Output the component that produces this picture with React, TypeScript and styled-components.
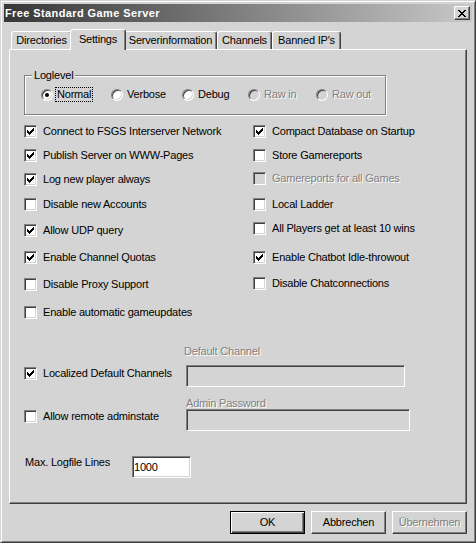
import React from "react";
import styled, { createGlobalStyle, css } from "styled-components";

const FACE = "#d4d4d4";
const SHADOW = "#808080";
const DARK = "#404040";
const LIGHT = "#ffffff";

const Global = createGlobalStyle`
  html, body { margin: 0; padding: 0; background: ${FACE}; }
  body {
    font-family: "Liberation Sans", Arial, sans-serif;
    font-size: 11px;
    line-height: 13px;
    letter-spacing: -0.2px;
    color: #000;
  }
  * { box-sizing: border-box; }
`;

const disabledText = css`
  color: ${SHADOW};
  text-shadow: 1px 1px 0 ${LIGHT};
`;

const Window = styled.div`
  width: 476px;
  height: 543px;
  display: flex;
  flex-direction: column;
  background: ${FACE};
  border: 1px solid;
  border-color: ${FACE} ${DARK} ${DARK} ${FACE};
  box-shadow: inset 1px 1px ${LIGHT}, inset -1px -1px ${SHADOW};
  padding: 3px;
`;

const TitleBar = styled.div`
  flex: none;
  height: 18px;
  display: flex;
  align-items: center;
  justify-content: space-between;
  padding: 0 2px 0 1px;
  background: linear-gradient(to right, #363636, #c8c8c8);
`;

const Title = styled.span`
  color: #fff;
  font-weight: bold;
  letter-spacing: 0.4px;
`;

const CloseButton = styled.div`
  width: 16px;
  height: 14px;
  display: flex;
  align-items: center;
  justify-content: center;
  background: ${FACE};
  border: 1px solid;
  border-color: ${LIGHT} ${DARK} ${DARK} ${LIGHT};
  box-shadow: inset -1px -1px ${SHADOW};
`;

const Body = styled.div`
  flex: 1;
  display: flex;
  flex-direction: column;
  padding: 7px 5px 0 5px;
`;

const TabStrip = styled.div`
  height: 20px;
  display: flex;
  align-items: flex-end;
  padding-left: 2px;
`;

const Tab = styled.div<{ $width: number; $active?: boolean }>`
  position: relative;
  width: ${(p) => p.$width}px;
  height: 18px;
  display: flex;
  align-items: center;
  justify-content: center;
  background: ${FACE};
  border-top: 1px solid ${LIGHT};
  border-left: 1px solid ${LIGHT};
  border-right: 1px solid ${DARK};
  border-radius: 3px 3px 0 0;
  box-shadow: inset -1px 0 ${SHADOW};
  padding-bottom: 1px;
  ${(p) =>
    p.$active &&
    css`
      z-index: 2;
      width: ${p.$width + 4}px;
      height: 21px;
      margin: 0 -2px -1px;
      padding-bottom: 2px;
    `}
`;

const Panel = styled.div`
  height: 455px;
  flex: none;
  display: flex;
  flex-direction: column;
  align-items: flex-start;
  border: 1px solid;
  border-color: ${LIGHT} ${DARK} ${DARK} ${LIGHT};
  box-shadow: inset -1px -1px ${SHADOW};
  padding-left: 14px;
`;

const GroupBox = styled.div`
  position: relative;
  margin-top: 25px;
  width: 362px;
  height: 40px;
  border: 1px solid ${SHADOW};
  box-shadow: inset 1px 1px ${LIGHT}, 1px 1px ${LIGHT};
  padding: 12px 0 0 16px;
`;

const Legend = styled.span`
  position: absolute;
  top: -7px;
  left: 7px;
  padding: 0 2px;
  background: ${FACE};
`;

const RadioRow = styled.div`
  display: grid;
  grid-template-columns: 70px 71px 66px 68px auto;
  height: 13px;
`;

const Option = styled.div`
  display: flex;
  align-items: center;
  gap: 4px;
`;

const Radio = styled.span<{ $checked?: boolean; $disabled?: boolean }>`
  width: 12px;
  height: 12px;
  flex: none;
  border-radius: 50%;
  display: flex;
  align-items: center;
  justify-content: center;
  border: 1px solid;
  border-color: ${SHADOW} ${LIGHT} ${LIGHT} ${SHADOW};
  box-shadow: inset 1px 1px ${DARK}, inset -1px -1px ${FACE};
  background: ${(p) => (p.$disabled ? FACE : LIGHT)};
  &::after {
    content: "";
    display: ${(p) => (p.$checked ? "block" : "none")};
    width: 4px;
    height: 4px;
    border-radius: 50%;
    background: #000;
  }
`;

const Caption = styled.span<{ $disabled?: boolean; $focus?: boolean }>`
  white-space: nowrap;
  ${(p) => p.$disabled && disabledText}
  ${(p) =>
    p.$focus &&
    css`
      outline: 1px dotted #000;
      margin-left: -1px;
      padding: 0 1px;
    `}
`;

const Columns = styled.div`
  display: grid;
  grid-template-columns: 229px 1fr;
  align-items: start;
  margin-top: 8px;
  width: 100%;
`;

const Column = styled.div`
  display: flex;
  flex-direction: column;
`;

const CheckRow = styled.div<{ $top?: number; $width?: number }>`
  height: 16px;
  display: flex;
  align-items: center;
  gap: 6px;
  margin-top: ${(p) => p.$top ?? 0}px;
  ${(p) => p.$width && `width: ${p.$width}px; flex: none;`}
`;

const Box = styled.span<{ $disabled?: boolean }>`
  width: 13px;
  height: 13px;
  flex: none;
  display: flex;
  align-items: center;
  justify-content: center;
  border: 1px solid;
  border-color: ${SHADOW} ${LIGHT} ${LIGHT} ${SHADOW};
  box-shadow: inset 1px 1px ${DARK}, inset -1px -1px ${FACE};
  background: ${(p) => (p.$disabled ? FACE : LIGHT)};
`;

const FieldBlock = styled.div<{ $top: number }>`
  display: flex;
  align-items: flex-start;
  margin-top: ${(p) => p.$top}px;
`;

const FieldColumn = styled.div`
  display: flex;
  flex-direction: column;
`;

const FieldLabel = styled.span<{ $indent?: number; $disabled?: boolean }>`
  margin-left: ${(p) => p.$indent ?? 0}px;
  white-space: nowrap;
  ${(p) => p.$disabled && disabledText}
`;

const TextField = styled.input<{ $width: number; $top?: number; $left?: number }>`
  width: ${(p) => p.$width}px;
  height: 22px;
  margin: ${(p) => p.$top ?? 0}px 0 0 ${(p) => p.$left ?? 0}px;
  padding: 0 1px;
  font: inherit;
  letter-spacing: inherit;
  color: #000;
  border: 1px solid;
  border-color: ${SHADOW} ${LIGHT} ${LIGHT} ${SHADOW};
  box-shadow: inset 1px 1px ${DARK}, inset -1px -1px ${FACE};
  background: ${LIGHT};
  outline: none;
  &:disabled {
    background: ${FACE};
  }
`;

const InlineLabel = styled.span<{ $width: number }>`
  width: ${(p) => p.$width}px;
  margin-left: 1px;
  flex: none;
`;

const ButtonBar = styled.div`
  display: flex;
  justify-content: flex-end;
  gap: 6px;
  margin-top: 7px;
`;

const Button = styled.button<{ $default?: boolean }>`
  width: 75px;
  height: 23px;
  padding: 0;
  font: inherit;
  letter-spacing: inherit;
  color: #000;
  background: ${FACE};
  border: 1px solid;
  border-color: ${LIGHT} ${DARK} ${DARK} ${LIGHT};
  box-shadow: inset -1px -1px ${SHADOW};
  ${(p) =>
    p.$default &&
    css`
      border-color: #000;
      box-shadow: inset 1px 1px ${LIGHT}, inset -1px -1px ${DARK},
        inset -2px -2px ${SHADOW};
    `}
  &:disabled {
    ${disabledText}
  }
`;

// classic 7x7 check glyph, one 3px run per column
const checkPath = [2, 3, 4, 3, 2, 1, 0]
  .map((y, x) => `M${x} ${y}h1v3h-1z`)
  .join("");

const CheckMark = () => (
  <svg width="7" height="7" viewBox="0 0 7 7" shapeRendering="crispEdges">
    <path d={checkPath} fill="#000" />
  </svg>
);

const CloseGlyph = () => (
  <svg width="8" height="7" viewBox="0 0 8 7" shapeRendering="crispEdges">
    <path
      d="M0 0h2l2 2.5 2-2.5h2l-3 3.5 3 3.5h-2l-2-2.5-2 2.5h-2l3-3.5z"
      fill="#000"
    />
  </svg>
);

type CheckProps = {
  label: string;
  checked?: boolean;
  disabled?: boolean;
  top?: number;
  width?: number;
};

const Check = ({ label, checked, disabled, top, width }: CheckProps) => (
  <CheckRow $top={top} $width={width}>
    <Box $disabled={disabled}>{checked && <CheckMark />}</Box>
    <Caption $disabled={disabled}>{label}</Caption>
  </CheckRow>
);

const tabs = [
  { label: "Directories", width: 61 },
  { label: "Settings", width: 52, active: true },
  { label: "Serverinformation", width: 93 },
  { label: "Channels", width: 55 },
  { label: "Banned IP's", width: 69 },
];

const levels = [
  { label: "Normal", checked: true, focus: true },
  { label: "Verbose" },
  { label: "Debug" },
  { label: "Raw in", disabled: true },
  { label: "Raw out", disabled: true },
];

const leftChecks: CheckProps[] = [
  { label: "Connect to FSGS Interserver Network", checked: true, top: 0 },
  { label: "Publish Server on WWW-Pages", checked: true, top: 8 },
  { label: "Log new player always", checked: true, top: 8 },
  { label: "Disable new Accounts", top: 9 },
  { label: "Allow UDP query", checked: true, top: 10 },
  { label: "Enable Channel Quotas", checked: true, top: 11 },
  { label: "Disable Proxy Support", top: 11 },
  { label: "Enable automatic gameupdates", top: 12 },
];

const rightChecks: CheckProps[] = [
  { label: "Compact Database on Startup", checked: true, top: 0 },
  { label: "Store Gamereports", top: 8 },
  { label: "Gamereports for all Games", disabled: true, top: 7 },
  { label: "Local Ladder", top: 10 },
  { label: "All Players get at least 10 wins", top: 8 },
  { label: "Enable Chatbot Idle-throwout", checked: true, top: 13 },
  { label: "Disable Chatconnections", top: 10 },
];

export default function App() {
  return (
    <>
      <Global />
      <Window>
        <TitleBar>
          <Title>Free Standard Game Server</Title>
          <CloseButton>
            <CloseGlyph />
          </CloseButton>
        </TitleBar>
        <Body>
          <TabStrip>
            {tabs.map((t) => (
              <Tab key={t.label} $width={t.width} $active={t.active}>
                {t.label}
              </Tab>
            ))}
          </TabStrip>
          <Panel>
            <GroupBox>
              <Legend>Loglevel</Legend>
              <RadioRow>
                {levels.map((l) => (
                  <Option key={l.label}>
                    <Radio $checked={l.checked} $disabled={l.disabled} />
                    <Caption $disabled={l.disabled} $focus={l.focus}>
                      {l.label}
                    </Caption>
                  </Option>
                ))}
              </RadioRow>
            </GroupBox>

            <Columns>
              <Column>
                {leftChecks.map((c) => (
                  <Check key={c.label} {...c} />
                ))}
              </Column>
              <Column>
                {rightChecks.map((c) => (
                  <Check key={c.label} {...c} />
                ))}
              </Column>
            </Columns>

            <FieldBlock $top={25}>
              <Check label="Localized Default Channels" checked top={20} width={160} />
              <FieldColumn>
                <FieldLabel $disabled>Default Channel</FieldLabel>
                <TextField $width={219} $top={7} $left={2} disabled />
              </FieldColumn>
            </FieldBlock>

            <FieldBlock $top={10}>
              <Check label="Allow remote adminstate" top={11} width={162} />
              <FieldColumn>
                <FieldLabel $disabled>Admin Password</FieldLabel>
                <TextField $width={224} $top={-1} disabled />
              </FieldColumn>
            </FieldBlock>

            <FieldBlock $top={25}>
              <InlineLabel $width={107}>Max. Logfile Lines</InlineLabel>
              <TextField $width={59} defaultValue="1000" />
            </FieldBlock>
          </Panel>
          <ButtonBar>
            <Button $default>OK</Button>
            <Button>Abbrechen</Button>
            <Button disabled>Übernehmen</Button>
          </ButtonBar>
        </Body>
      </Window>
    </>
  );
}
